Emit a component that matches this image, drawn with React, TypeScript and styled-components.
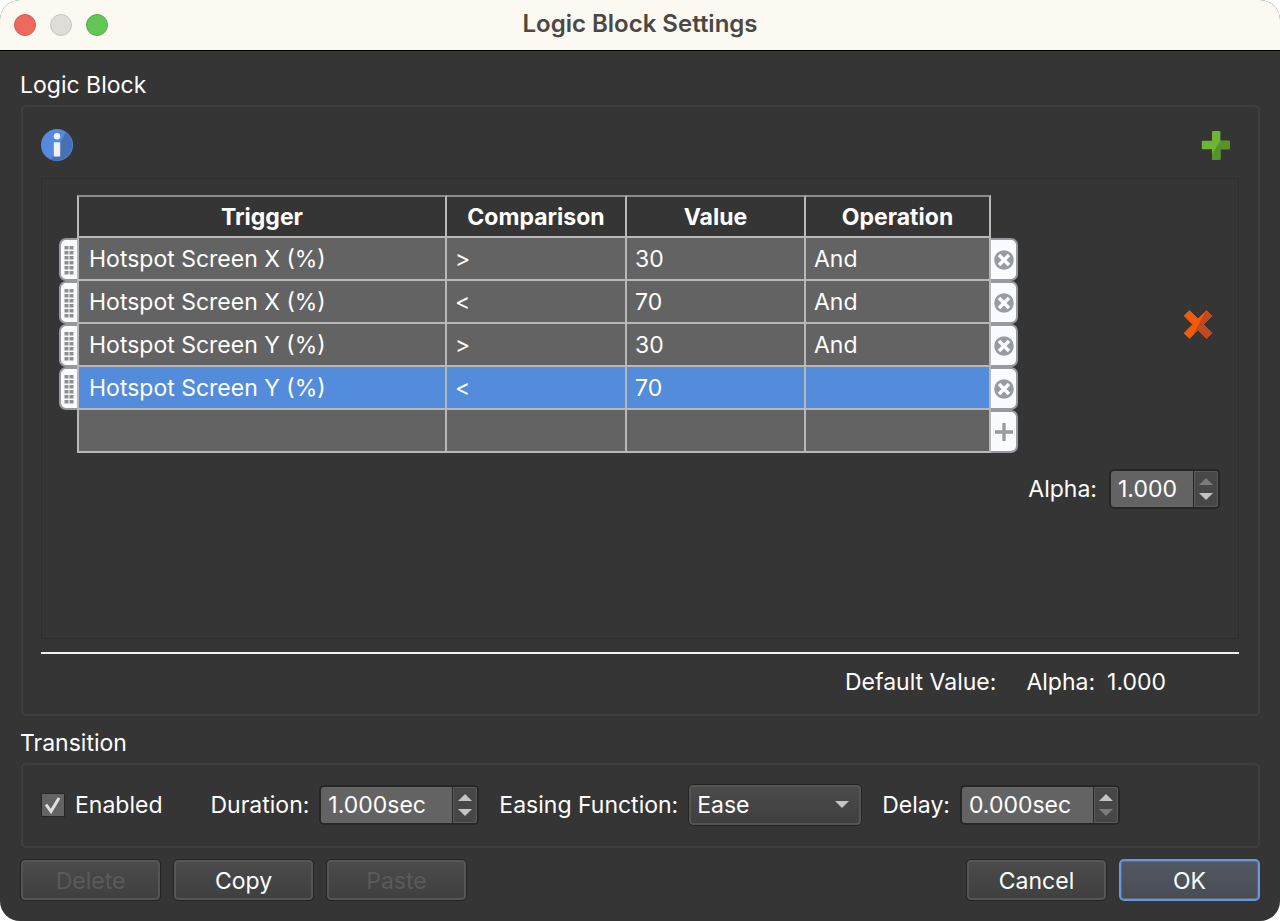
import React from "react";
import styled, { createGlobalStyle, css } from "styled-components";

const GlobalStyle = createGlobalStyle`
  *, *::before, *::after { box-sizing: border-box; }
  body {
    margin: 0;
    background: #fff;
    color: #fff;
    font-family: Inter, "Liberation Sans", sans-serif;
    font-size: 23px;
    line-height: 28px;
  }
  button, input, select { font: inherit; color: inherit; margin: 0; }
`;

const Window = styled.div`
  min-height: 100vh;
  display: flex;
  flex-direction: column;
  border-radius: 20px;
  overflow: hidden;
  background: #353535;
`;

const TitleBar = styled.header`
  display: grid;
  grid-template-columns: 1fr auto 1fr;
  align-items: center;
  height: 51px;
  padding: 0 14px;
  background: #fcf8f2;
  border-bottom: 1px solid #000;
`;

const Lights = styled.div`
  display: flex;
  gap: 14px;
`;

const Light = styled.button<{ $fill: string; $edge: string }>`
  width: 22px;
  height: 22px;
  padding: 0;
  border-radius: 50%;
  background: ${(p) => p.$fill};
  border: 1px solid ${(p) => p.$edge};
`;

const Title = styled.h1`
  margin: 0;
  padding-bottom: 2px;
  font-size: 24px;
  line-height: 28px;
  font-weight: 600;
  color: #4b4844;
`;

const Body = styled.main`
  flex: 1;
  display: flex;
  flex-direction: column;
  padding: 20px;
`;

const Section = styled.section<{ $grow?: boolean }>`
  display: flex;
  flex-direction: column;
  gap: 6px;
  ${(p) => p.$grow && css`flex: 1; margin-bottom: 13px;`}
`;

const SectionTitle = styled.h2`
  margin: 0;
  font-size: 23px;
  line-height: 28px;
  font-weight: 400;
`;

const frame = css`
  margin-left: 1px;
  border: 2px solid #3f3f3f;
  border-radius: 5px;
`;

const Group = styled.div`
  flex: 1;
  display: flex;
  flex-direction: column;
  padding: 22px 19px 18px 18px;
  ${frame}
`;

const Tools = styled.div`
  display: flex;
  justify-content: space-between;
  padding-right: 7px;
  margin-bottom: 17px;
`;

const IconButton = styled.button`
  display: block;
  width: 32px;
  height: 32px;
  padding: 0;
  border: 0;
  background: none;

  svg { display: block; }
`;

const Panel = styled.div`
  flex: 1;
  display: flex;
  flex-direction: column;
  gap: 16px;
  padding: 16px 18px 16px 17px;
  border: 1px solid #2d2d2d;
`;

const Rule = styled.hr`
  width: 100%;
  height: 2px;
  margin: 13px 0 14px;
  border: 0;
  background: #f0eff2;
`;

const LogicRow = styled.div`
  display: flex;
  align-items: center;
`;

const TableBox = styled.div`
  flex: 1;
`;

const RemoveBox = styled.div`
  width: 202px;
  display: flex;
  justify-content: flex-end;
  padding-right: 6px;
`;

const Table = styled.table`
  width: 100%;
  table-layout: fixed;
  border-collapse: separate;
  border-spacing: 0;
`;

const Head = styled.th<{ $first?: boolean }>`
  height: 43px;
  padding: 1px 0 0;
  font-weight: 700;
  border: solid #b8b8b8;
  border-top-color: #8c8c8c;
  border-width: 2px 2px 2px ${(p) => (p.$first ? "2px" : "0")};
`;

const Cell = styled.td<{ $first?: boolean; $selected?: boolean }>`
  height: 43px;
  padding: 1px 9px 0;
  padding-left: ${(p) => (p.$first ? "10px" : "8px")};
  white-space: nowrap;
  background: ${(p) => (p.$selected ? "#538cda" : "#636363")};
  border: solid #b8b8b8;
  border-width: 0 2px 2px ${(p) => (p.$first ? "2px" : "0")};
`;

const SideCell = styled.td`
  padding: 0;
`;

const SideButton = styled.button<{ $side: "left" | "right" }>`
  display: flex;
  align-items: center;
  justify-content: center;
  width: 100%;
  height: 43px;
  padding: 0;
  background: #fafbff;
  border: 2px solid #98999f;
  ${(p) =>
    p.$side === "left"
      ? css`border-right: 0; border-radius: 7px 0 0 7px;`
      : css`border-left: 0; border-radius: 0 7px 7px 0;`}
`;

const FieldRow = styled.div`
  display: flex;
  align-items: center;
  justify-content: flex-end;
  gap: 12px;
`;

const DefaultRow = styled.div`
  display: flex;
  justify-content: flex-end;
  padding-right: 73px;
`;

const DefaultLabel = styled.span`
  margin-right: 30px;
`;

const DefaultName = styled.span`
  margin-right: 12px;
`;

const SpinBox = styled.div<{ $width: number }>`
  display: flex;
  width: ${(p) => p.$width}px;
  height: 40px;
  border: 2px solid #262626;
  border-radius: 5px;
  background: #636363;
`;

const SpinInput = styled.input`
  flex: 1;
  min-width: 0;
  padding: 0 0 0 7px;
  border: 0;
  outline: 0;
  background: none;
`;

const SpinArrows = styled.div`
  display: flex;
  flex-direction: column;
  width: 25px;
  padding: 3px 0;
  border-left: 1px solid #262626;
  box-shadow: inset 0 0 0 1px #5a5a5a;
  border-radius: 0 3px 3px 0;
  background: #474747;
`;

const SpinArrow = styled.button`
  flex: 1;
  display: flex;
  align-items: center;
  justify-content: center;
  padding: 0;
  border: 0;
  background: none;
`;

const TransitionRow = styled.div`
  display: flex;
  align-items: center;
  gap: 20px;
  height: 81px;
  padding: 0 18px 2px;
`;

const TransitionGroup = styled.div`
  ${frame}
`;

const Field = styled.div`
  display: flex;
  align-items: center;
  gap: 10px;
`;

const CheckLabel = styled.label`
  display: flex;
  align-items: center;
  gap: 10px;
  margin-right: 28px;
`;

const CheckBox = styled.input`
  appearance: none;
  width: 24px;
  height: 24px;
  border: 1px solid #262626;
  background: #636363;

  &:checked {
    background: #636363
      url("data:image/svg+xml,%3Csvg xmlns='http://www.w3.org/2000/svg' viewBox='0 0 22 22'%3E%3Cpath d='M4 10.500 L9 17.500 L17 4' fill='none' stroke='%23e0e0e0' stroke-width='3'/%3E%3C/svg%3E")
      center / 22px 22px no-repeat;
  }
`;

const SelectBox = styled.div`
  position: relative;
  width: 174px;
`;

const raised = css`
  background: linear-gradient(#4b4b4b, #3f3f3f);
  border: 1px solid #242424;
  border-radius: 5px;
  box-shadow: inset 0 0 0 2px #555;
`;

const Select = styled.select`
  appearance: none;
  display: block;
  width: 100%;
  height: 42px;
  padding: 0 40px 0 8px;
  ${raised}
`;

const SelectArrow = styled.svg`
  position: absolute;
  right: 13px;
  top: 17px;
  pointer-events: none;
`;

const Footer = styled.footer`
  display: flex;
  gap: 12px;
  margin-top: 11px;
`;

const PushButton = styled.button<{ $primary?: boolean; $end?: boolean }>`
  width: 141px;
  height: 42px;
  padding: 2px 0 0;
  ${raised}
  ${(p) => p.$end && css`margin-left: auto;`}
  ${(p) =>
    p.$primary &&
    css`
      background: linear-gradient(#525861, #484c55);
      border: 2px solid #6797dc;
      box-shadow: inset 0 0 0 1px #626972;
    `}

  &:disabled { color: #5a5a5a; }
`;

const InfoIcon = () => (
  <svg width="32" height="32" viewBox="0 0 32 32" aria-hidden="true">
    <circle cx="16" cy="16" r="16" fill="#548bdc" />
    <path d="M25 3A16 16 0 0 1 10 30.800Z" fill="#4870b4" />
    <circle cx="16" cy="7.200" r="3.200" fill="#f4f5fa" />
    <rect x="12.800" y="13.300" width="6.400" height="14.200" fill="#f0f1f6" />
  </svg>
);

const AddIcon = () => (
  <svg width="32" height="32" viewBox="0 0 32 32" aria-hidden="true">
    <path
      d="M13 2h6.400a1 1 0 0 1 1 1v8.800H29a1 1 0 0 1 1 1v6.400a1 1 0 0 1-1 1h-8.600V30a1 1 0 0 1-1 1H13a1 1 0 0 1-1-1v-9.800H2.800a1 1 0 0 1-1-1v-6.400a1 1 0 0 1 1-1H12V3a1 1 0 0 1 1-1Z"
      fill="#6fb534"
    />
    <path
      d="M20.400 11.800H29a1 1 0 0 1 1 1v6.400a1 1 0 0 1-1 1h-8.600V30a1 1 0 0 1-1 1H13a1 1 0 0 1-1-1v-5Z"
      fill="#58922a"
    />
  </svg>
);

const RemoveIcon = () => (
  <svg width="32" height="32" viewBox="0 0 32 32" aria-hidden="true">
    <path
      d="M7.500 2.700 16 11 24.500 2.700 29.800 7.800 21.200 16.500 29.800 25.200 24.500 30.300 16 22 7.500 30.300 2.200 25.200 10.800 16.500 2.200 7.800Z"
      fill="#f45a0a"
      stroke="#f45a0a"
      strokeLinejoin="round"
    />
    <path
      d="M24.500 2.700 29.800 7.800 21.200 16.500 29.800 25.200 24.500 30.300 16 22 12 26Z"
      fill="#bf4a22"
      stroke="#bf4a22"
      strokeLinejoin="round"
    />
  </svg>
);

const GripIcon = () => (
  <svg width="10" height="30" viewBox="0 0 10 30" aria-hidden="true">
    {[0, 1, 2, 3, 4, 5].map((row) =>
      [0.5, 5.5].map((x) => (
        <rect key={`${row}-${x}`} x={x} y={row * 5 + 1} width="4" height="3.5" fill="#8e8f94" />
      ))
    )}
  </svg>
);

const ClearIcon = () => (
  <svg width="20" height="20" viewBox="0 0 20 20" aria-hidden="true">
    <circle cx="10" cy="10" r="9.800" fill="#999ba3" />
    <path d="M5 5 15 15M15 5 5 15" stroke="#fafbff" strokeWidth="3.400" />
  </svg>
);

const PlusIcon = () => (
  <svg width="20" height="20" viewBox="0 0 20 20" aria-hidden="true">
    <path d="M10 1v18M1 10h18" stroke="#999ba3" strokeWidth="3.400" />
  </svg>
);

const Triangle = ({ up, dim }: { up?: boolean; dim?: boolean }) => (
  <svg width="14" height="7" viewBox="0 0 14 7" aria-hidden="true">
    <path d={up ? "M0 7 7 0 14 7Z" : "M0 0H14L7 7Z"} fill={dim ? "#7c7c7c" : "#c4c4c4"} />
  </svg>
);

interface SpinProps {
  id: string;
  value: string;
  width: number;
  upDim?: boolean;
  downDim?: boolean;
}

const Spin = ({ id, value, width, upDim, downDim }: SpinProps) => (
  <SpinBox $width={width}>
    <SpinInput id={id} type="text" defaultValue={value} />
    <SpinArrows>
      <SpinArrow type="button" aria-label="Increase">
        <Triangle up dim={upDim} />
      </SpinArrow>
      <SpinArrow type="button" aria-label="Decrease">
        <Triangle dim={downDim} />
      </SpinArrow>
    </SpinArrows>
  </SpinBox>
);

const rules = [
  { trigger: "Hotspot Screen X (%)", comparison: ">", value: "30", operation: "And" },
  { trigger: "Hotspot Screen X (%)", comparison: "<", value: "70", operation: "And" },
  { trigger: "Hotspot Screen Y (%)", comparison: ">", value: "30", operation: "And" },
  { trigger: "Hotspot Screen Y (%)", comparison: "<", value: "70", operation: "", selected: true },
];

export default function App() {
  return (
    <>
      <GlobalStyle />
      <Window>
        <TitleBar>
          <Lights>
            <Light type="button" aria-label="Close" $fill="#ed6a5f" $edge="#d5584e" />
            <Light type="button" aria-label="Minimize" $fill="#e0dcd6" $edge="#c9c5c0" />
            <Light type="button" aria-label="Zoom" $fill="#61c654" $edge="#52ad46" />
          </Lights>
          <Title>Logic Block Settings</Title>
        </TitleBar>
        <Body>
          <Section $grow>
            <SectionTitle>Logic Block</SectionTitle>
            <Group>
              <Tools>
                <IconButton type="button" aria-label="Information">
                  <InfoIcon />
                </IconButton>
                <IconButton type="button" aria-label="Add logic">
                  <AddIcon />
                </IconButton>
              </Tools>
              <Panel>
                <LogicRow>
                  <TableBox>
                    <Table>
                      <colgroup>
                        <col width={18} />
                        <col />
                        <col width={180} />
                        <col width={179} />
                        <col width={185} />
                        <col width={27} />
                      </colgroup>
                      <thead>
                        <tr>
                          <SideCell />
                          <Head $first>Trigger</Head>
                          <Head>Comparison</Head>
                          <Head>Value</Head>
                          <Head>Operation</Head>
                          <SideCell />
                        </tr>
                      </thead>
                      <tbody>
                        {rules.map((rule, i) => (
                          <tr key={i}>
                            <SideCell>
                              <SideButton type="button" $side="left" aria-label="Move row">
                                <GripIcon />
                              </SideButton>
                            </SideCell>
                            <Cell $first $selected={rule.selected}>{rule.trigger}</Cell>
                            <Cell $selected={rule.selected}>{rule.comparison}</Cell>
                            <Cell $selected={rule.selected}>{rule.value}</Cell>
                            <Cell $selected={rule.selected}>{rule.operation}</Cell>
                            <SideCell>
                              <SideButton type="button" $side="right" aria-label="Remove row">
                                <ClearIcon />
                              </SideButton>
                            </SideCell>
                          </tr>
                        ))}
                        <tr>
                          <SideCell />
                          <Cell $first />
                          <Cell />
                          <Cell />
                          <Cell />
                          <SideCell>
                            <SideButton type="button" $side="right" aria-label="Add row">
                              <PlusIcon />
                            </SideButton>
                          </SideCell>
                        </tr>
                      </tbody>
                    </Table>
                  </TableBox>
                  <RemoveBox>
                    <IconButton type="button" aria-label="Remove logic">
                      <RemoveIcon />
                    </IconButton>
                  </RemoveBox>
                </LogicRow>
                <FieldRow>
                  <label htmlFor="alpha">Alpha:</label>
                  <Spin id="alpha" value="1.000" width={111} upDim />
                </FieldRow>
              </Panel>
              <Rule />
              <DefaultRow>
                <DefaultLabel>Default Value:</DefaultLabel>
                <DefaultName>Alpha:</DefaultName>
                <span>1.000</span>
              </DefaultRow>
            </Group>
          </Section>
          <Section>
            <SectionTitle>Transition</SectionTitle>
            <TransitionGroup>
              <TransitionRow>
                <CheckLabel>
                  <CheckBox type="checkbox" defaultChecked />
                  Enabled
                </CheckLabel>
                <Field>
                  <label htmlFor="duration">Duration:</label>
                  <Spin id="duration" value="1.000sec" width={160} />
                </Field>
                <Field>
                  <label htmlFor="easing">Easing Function:</label>
                  <SelectBox>
                    <Select id="easing" defaultValue="Ease">
                      <option>Ease</option>
                    </Select>
                    <SelectArrow width="14" height="7" viewBox="0 0 14 7" aria-hidden="true">
                      <path d="M0 0H14L7 7Z" fill="#c4c4c4" />
                    </SelectArrow>
                  </SelectBox>
                </Field>
                <Field>
                  <label htmlFor="delay">Delay:</label>
                  <Spin id="delay" value="0.000sec" width={160} downDim />
                </Field>
              </TransitionRow>
            </TransitionGroup>
          </Section>
          <Footer>
            <PushButton type="button" disabled>Delete</PushButton>
            <PushButton type="button">Copy</PushButton>
            <PushButton type="button" disabled>Paste</PushButton>
            <PushButton type="button" $end>Cancel</PushButton>
            <PushButton type="button" $primary>OK</PushButton>
          </Footer>
        </Body>
      </Window>
    </>
  );
}
